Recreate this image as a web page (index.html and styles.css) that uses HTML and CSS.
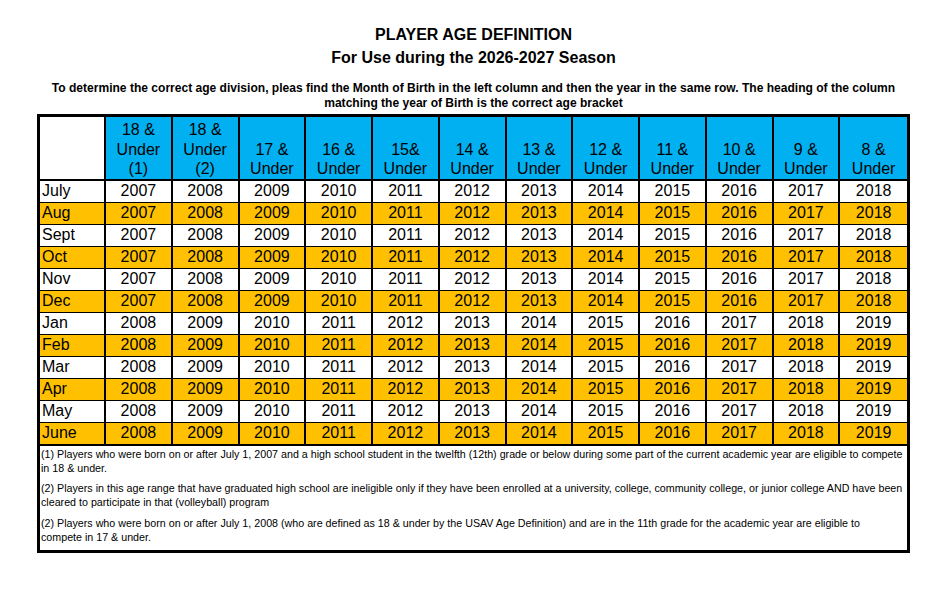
FILE: index.html
```html
<!DOCTYPE html>
<html>
<head>
<meta charset="utf-8">
<link rel="stylesheet" href="styles.css">
</head>
<body>
<div class="page">
  <h1 class="title">PLAYER AGE DEFINITION</h1>
  <h2 class="title">For Use during the 2026-2027 Season</h2>
  <p class="intro">To determine the correct age division, pleas find the Month of Birth in the left column and then the year in the same row. The heading of the column matching the year of Birth is the correct age bracket</p>
  <table class="ages">
    <colgroup>
      <col class="c-month">
      <col span="12">
    </colgroup>
    <thead>
      <tr>
        <th class="blank"></th>
        <th>18 &amp;<br>Under<br>(1)</th>
        <th>18 &amp;<br>Under<br>(2)</th>
        <th>17 &amp;<br>Under</th>
        <th>16 &amp;<br>Under</th>
        <th>15&amp;<br>Under</th>
        <th>14 &amp;<br>Under</th>
        <th>13 &amp;<br>Under</th>
        <th>12 &amp;<br>Under</th>
        <th>11 &amp;<br>Under</th>
        <th>10 &amp;<br>Under</th>
        <th>9 &amp;<br>Under</th>
        <th>8 &amp;<br>Under</th>
      </tr>
    </thead>
    <tbody>
      <tr><td class="m">July</td><td>2007</td><td>2008</td><td>2009</td><td>2010</td><td>2011</td><td>2012</td><td>2013</td><td>2014</td><td>2015</td><td>2016</td><td>2017</td><td>2018</td></tr>
      <tr class="alt"><td class="m">Aug</td><td>2007</td><td>2008</td><td>2009</td><td>2010</td><td>2011</td><td>2012</td><td>2013</td><td>2014</td><td>2015</td><td>2016</td><td>2017</td><td>2018</td></tr>
      <tr><td class="m">Sept</td><td>2007</td><td>2008</td><td>2009</td><td>2010</td><td>2011</td><td>2012</td><td>2013</td><td>2014</td><td>2015</td><td>2016</td><td>2017</td><td>2018</td></tr>
      <tr class="alt"><td class="m">Oct</td><td>2007</td><td>2008</td><td>2009</td><td>2010</td><td>2011</td><td>2012</td><td>2013</td><td>2014</td><td>2015</td><td>2016</td><td>2017</td><td>2018</td></tr>
      <tr><td class="m">Nov</td><td>2007</td><td>2008</td><td>2009</td><td>2010</td><td>2011</td><td>2012</td><td>2013</td><td>2014</td><td>2015</td><td>2016</td><td>2017</td><td>2018</td></tr>
      <tr class="alt"><td class="m">Dec</td><td>2007</td><td>2008</td><td>2009</td><td>2010</td><td>2011</td><td>2012</td><td>2013</td><td>2014</td><td>2015</td><td>2016</td><td>2017</td><td>2018</td></tr>
      <tr><td class="m">Jan</td><td>2008</td><td>2009</td><td>2010</td><td>2011</td><td>2012</td><td>2013</td><td>2014</td><td>2015</td><td>2016</td><td>2017</td><td>2018</td><td>2019</td></tr>
      <tr class="alt"><td class="m">Feb</td><td>2008</td><td>2009</td><td>2010</td><td>2011</td><td>2012</td><td>2013</td><td>2014</td><td>2015</td><td>2016</td><td>2017</td><td>2018</td><td>2019</td></tr>
      <tr><td class="m">Mar</td><td>2008</td><td>2009</td><td>2010</td><td>2011</td><td>2012</td><td>2013</td><td>2014</td><td>2015</td><td>2016</td><td>2017</td><td>2018</td><td>2019</td></tr>
      <tr class="alt"><td class="m">Apr</td><td>2008</td><td>2009</td><td>2010</td><td>2011</td><td>2012</td><td>2013</td><td>2014</td><td>2015</td><td>2016</td><td>2017</td><td>2018</td><td>2019</td></tr>
      <tr><td class="m">May</td><td>2008</td><td>2009</td><td>2010</td><td>2011</td><td>2012</td><td>2013</td><td>2014</td><td>2015</td><td>2016</td><td>2017</td><td>2018</td><td>2019</td></tr>
      <tr class="alt last"><td class="m">June</td><td>2008</td><td>2009</td><td>2010</td><td>2011</td><td>2012</td><td>2013</td><td>2014</td><td>2015</td><td>2016</td><td>2017</td><td>2018</td><td>2019</td></tr>
    </tbody>
    <tfoot>
      <tr>
        <td class="notes" colspan="13">
          <p>(1) Players who were born on or after July 1, 2007 and a high school student in the twelfth (12th) grade or below during some part of the current academic year are eligible to compete in 18 &amp; under.</p>
          <p>(2) Players in this age range that have graduated high school are ineligible only if they have been enrolled at a university, college, community college, or junior college AND have been cleared to participate in that (volleyball) program</p>
          <p>(2) Players who were born on or after July 1, 2008 (who are defined as 18 &amp; under by the USAV Age Definition) and are in the 11th grade for the academic year are eligible to compete in 17 &amp; under.</p>
        </td>
      </tr>
    </tfoot>
  </table>
</div>
</body>
</html>
```

FILE: styles.css
```css
html, body {
  margin: 0;
  padding: 0;
  background: #ffffff;
}

body {
  font-family: "Liberation Sans", Arial, sans-serif;
  color: #000000;
}

.page {
  width: 947px;
  padding-top: 23px;
}

.title {
  margin: 0;
  font-size: 16px;
  font-weight: bold;
  line-height: 23px;
  text-align: center;
}

.intro {
  margin: 12px 40px 2.5px;
  font-size: 12.05px;
  font-weight: bold;
  line-height: 15px;
  text-align: center;
}

.ages {
  width: 873px;
  margin: 0 auto;
  border: 3px solid #000;
  border-spacing: 0;
  table-layout: fixed;
  font-size: 16px;
}

.c-month {
  width: 66px;
}

.ages th,
.ages td {
  padding: 0;
  border-right: 2px solid #000;
  text-align: center;
}

.ages th:last-child,
.ages td:last-child {
  border-right: none;
}

.ages th {
  height: 62px;
  background: #00b0f0;
  font-weight: normal;
  line-height: 19.5px;
  vertical-align: bottom;
  border-bottom: 2px solid #000;
}

.ages th.blank {
  background: #ffffff;
}

.ages tbody td {
  height: 21px;
  line-height: 20px;
  border-bottom: 1px solid #000;
  background: #ffffff;
}

.ages tbody tr.alt td {
  background: #ffc000;
}

.ages tbody tr.last td {
  border-bottom: 2px solid #000;
}

.ages td.m {
  text-align: left;
  padding-left: 2px;
}

.ages td.notes {
  text-align: left;
  vertical-align: top;
  height: 100px;
  padding: 1px 4px 0 1px;
  font-size: 10.7px;
  line-height: 14px;
}

.notes p {
  margin: 0 0 6.5px;
}
```
